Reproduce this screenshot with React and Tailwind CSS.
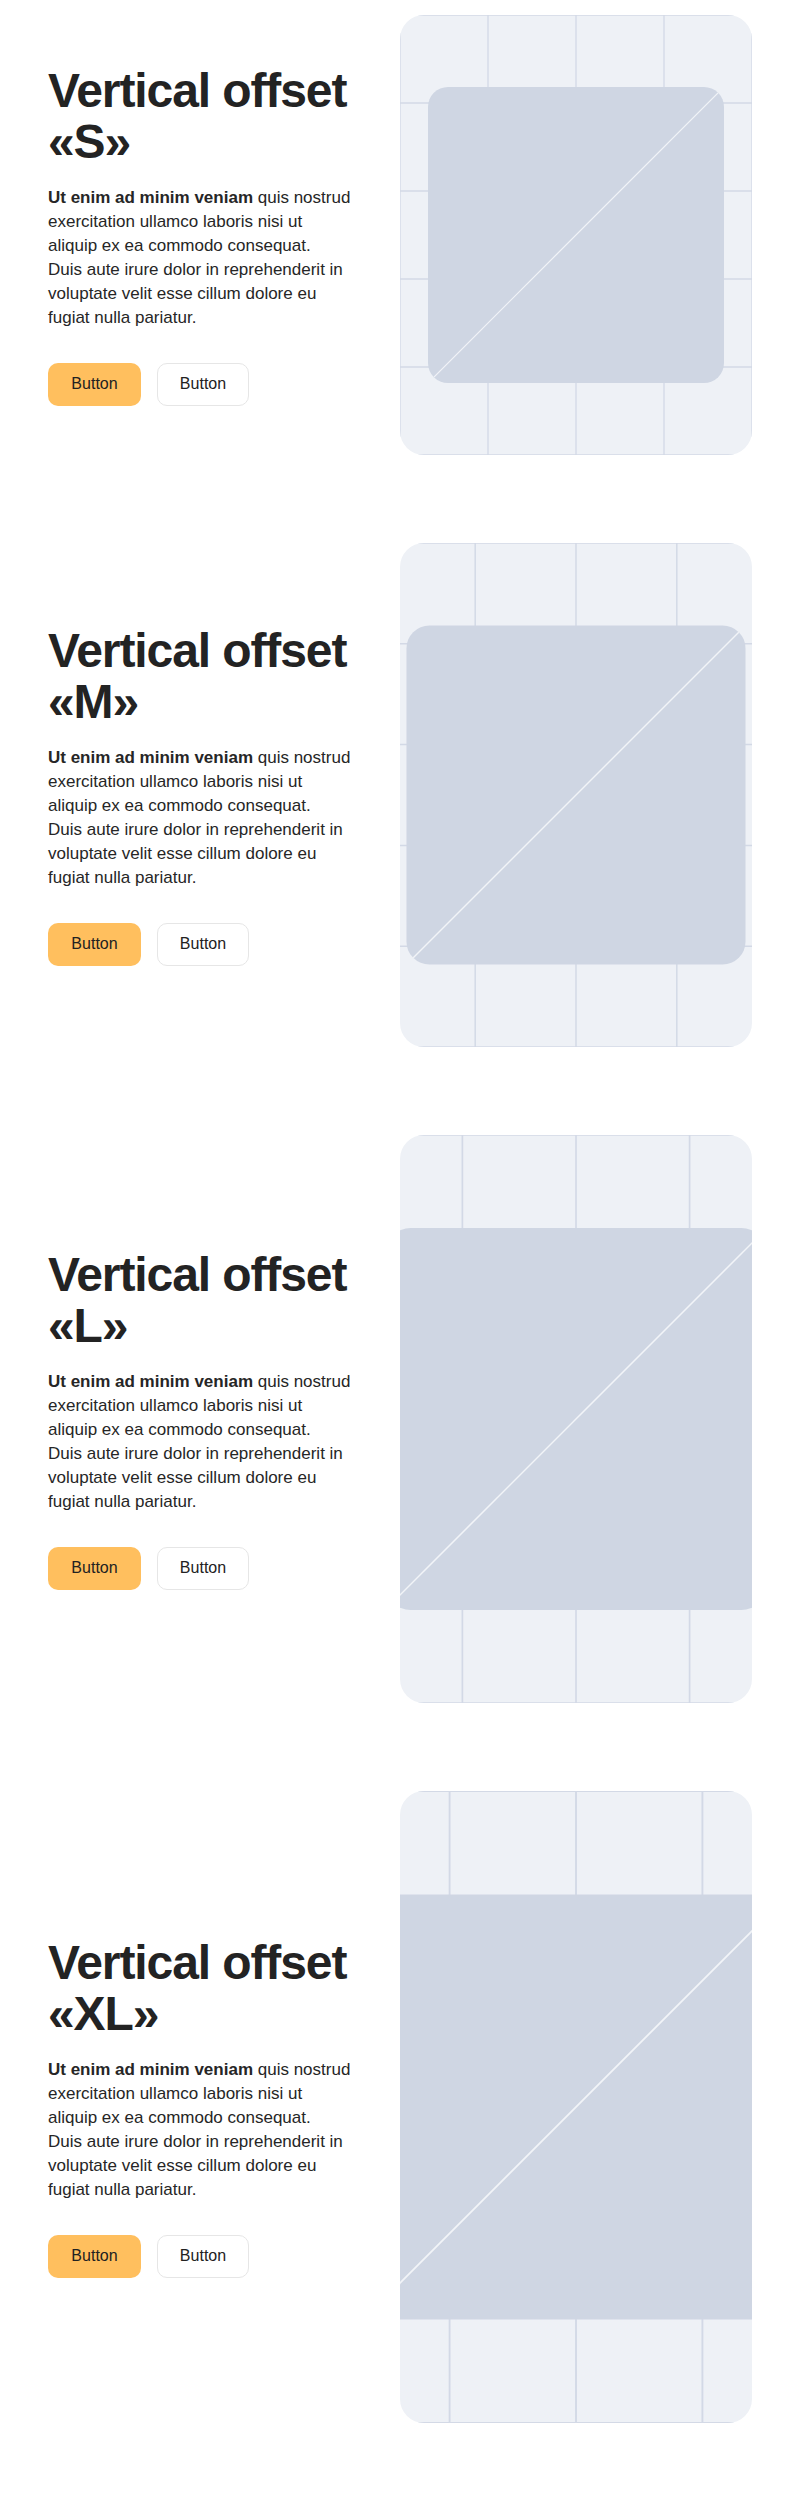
import React from 'react';

const sections = [
  { label: 'S', height: 440 },
  { label: 'M', height: 504 },
  { label: 'L', height: 568 },
  { label: 'XL', height: 632 },
];

const verticals = [-264, -176, -88, 0, 88, 176, 264];
const horizontals = [-396, -308, -220, -132, -44, 44, 132, 220, 308, 396];

// image placeholder: grid + rounded square with a diagonal, scaled with the card height
const Placeholder = ({ height, id }) => {
  const scale = height / 440;
  return (
    <div className="overflow-hidden rounded-3xl bg-[#eef1f6]">
      <svg width="352" height={height} viewBox={`0 0 352 ${height}`} className="block">
        <defs>
          <clipPath id={`clip-${id}`}>
            <rect x="-148" y="-148" width="296" height="296" rx="20" />
          </clipPath>
        </defs>
        <g transform={`translate(176 ${height / 2}) scale(${scale})`}>
          {verticals.map((x) => (
            <line key={`v${x}`} x1={x} y1="-400" x2={x} y2="400" stroke="#d3d9e6" strokeWidth="1.3" />
          ))}
          {horizontals.map((y) => (
            <line key={`h${y}`} x1="-400" y1={y} x2="400" y2={y} stroke="#d3d9e6" strokeWidth="1.3" />
          ))}
          <rect x="-148" y="-148" width="296" height="296" rx="20" fill="#cfd6e3" />
          <line
            x1="-148"
            y1="148"
            x2="148"
            y2="-148"
            stroke="#f2f4f8"
            strokeWidth="1.2"
            clipPath={`url(#clip-${id})`}
          />
        </g>
      </svg>
    </div>
  );
};

const Section = ({ label, height }) => (
  <section className="grid grid-cols-2 items-center">
    <div>
      <h2 className="text-[48px] font-bold leading-[51px] tracking-[-1.1px] text-[#232323]">
        Vertical offset
        <br />
        «{label}»
      </h2>
      <p className="mt-[19px] whitespace-nowrap text-[17px] leading-6 text-[#262626]">
        <b className="font-bold">Ut enim ad minim veniam</b> quis nostrud
        <br />
        exercitation ullamco laboris nisi ut
        <br />
        aliquip ex ea commodo consequat.
        <br />
        Duis aute irure dolor in reprehenderit in
        <br />
        voluptate velit esse cillum dolore eu
        <br />
        fugiat nulla pariatur.
      </p>
      <div className="mt-[33px] flex gap-4">
        <button
          type="button"
          className="h-[43px] w-[93px] rounded-[10px] bg-[#ffbf5e] text-base text-[#222]"
        >
          Button
        </button>
        <button
          type="button"
          className="h-[43px] w-[92px] rounded-[10px] border border-[#e6e6e6] bg-white text-base text-[#222]"
        >
          Button
        </button>
      </div>
    </div>
    <Placeholder height={height} id={label} />
  </section>
);

export default function App() {
  return (
    <div className="flex flex-col gap-[88px] bg-white px-12 pb-[71px] pt-[15px] font-['Liberation_Sans',Arial,sans-serif]">
      {sections.map((s) => (
        <Section key={s.label} {...s} />
      ))}
    </div>
  );
}
